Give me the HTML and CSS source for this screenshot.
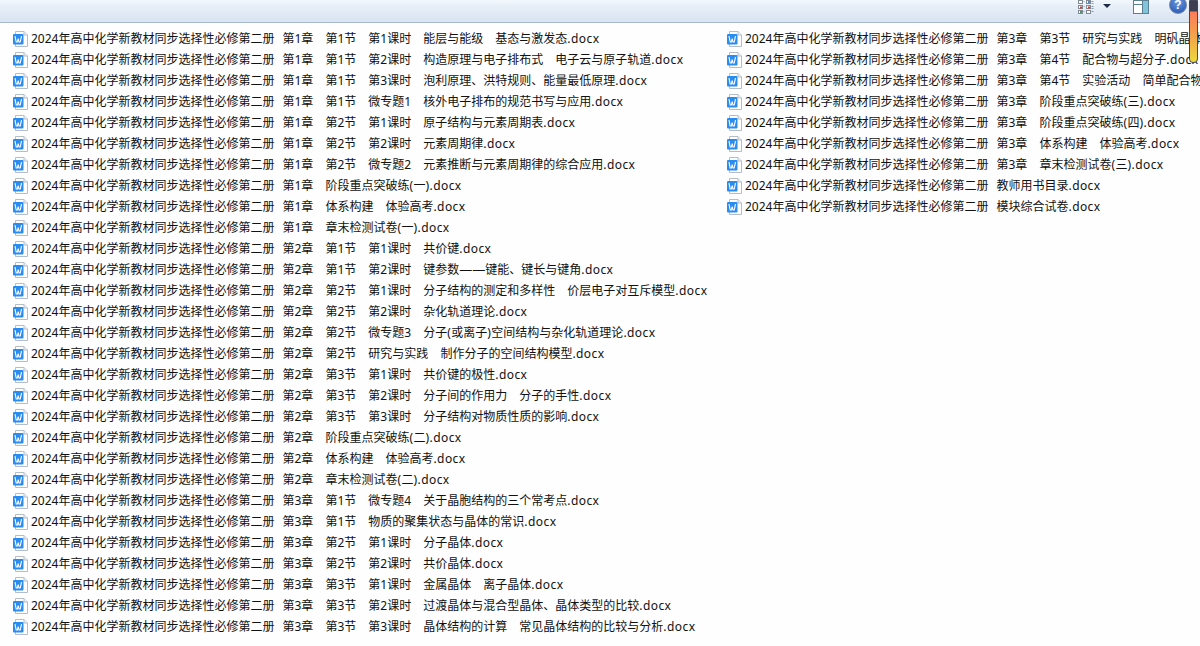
FILE: index.html
```html
<!DOCTYPE html>
<html lang="zh-CN">
<head>
<meta charset="utf-8">
<title>文件列表</title>
<link rel="stylesheet" href="styles.css">
</head>
<body>
<svg class="defs" width="0" height="0" aria-hidden="true">
  <symbol id="word" viewBox="0 0 16 16">
    <path d="M2.5 .5H11L14.5 4V15.5H2.5Z" fill="#fff" stroke="#b4bdc8"/>
    <path d="M11 .5V4H14.5" fill="#eef1f5" stroke="#b4bdc8"/>
    <rect x="0" y="3" width="10.5" height="10.5" rx="1" fill="#2b8cf0"/>
    <path d="M2 5.2 3.2 11H4.4L5.2 7.5 6 11H7.2L8.5 5.2" fill="none" stroke="#fff" stroke-width="1.1"/>
  </symbol>
</svg>
<header class="toolbar">
  <svg class="view-icon" width="16" height="14" viewBox="0 0 16 14">
    <g fill="#fff" stroke="#7f8a94">
      <rect x=".5" y=".5" width="4" height="3"/><rect x=".5" y="5.5" width="4" height="3"/><rect x=".5" y="10.5" width="4" height="3"/>
      <rect x="8.5" y=".5" width="4" height="3"/><rect x="8.5" y="5.5" width="4" height="3"/><rect x="8.5" y="10.5" width="4" height="3"/>
    </g>
    <g fill="#8d9aa6">
      <rect x="5.5" y="1" width="1" height="1"/><rect x="5.5" y="6" width="1" height="1"/><rect x="5.5" y="11" width="1" height="1"/>
      <rect x="13.5" y="1" width="2" height="1"/><rect x="13.5" y="3" width="2" height="1"/><rect x="13.5" y="6" width="2" height="1"/><rect x="13.5" y="8" width="2" height="1"/><rect x="13.5" y="11" width="2" height="1"/>
    </g>
    <rect x="2" y="6.5" width="2" height="2" fill="#d8392b"/>
    <rect x="10" y="6.5" width="2" height="2" fill="#d8392b"/>
    <rect x="2" y="11" width="2" height="2" fill="#4d9a6a"/>
    <rect x="10" y="1" width="2" height="2" fill="#4d8fc0"/>
  </svg>
  <span class="caret"></span>
  <svg class="pane-icon" width="16" height="14" viewBox="0 0 16 14">
    <rect x=".5" y=".5" width="15" height="13" fill="#fff" stroke="#5d7f94"/>
    <rect x="10" y="1" width="5" height="12" fill="#7fc4d8"/>
    <path d="M1 4.5H10M9.5 1V13" stroke="#5d7f94"/>
  </svg>
  <span class="help">?</span>
</header>
<div class="gauge"></div>
<main class="files">
<div class="file"><svg class="ico"><use href="#word"/></svg><span>2024年高中化学新教材同步选择性必修第二册  第1章   第1节   第1课时   能层与能级   基态与激发态<span class="ext">.docx</span></span></div>
<div class="file"><svg class="ico"><use href="#word"/></svg><span>2024年高中化学新教材同步选择性必修第二册  第1章   第1节   第2课时   构造原理与电子排布式   电子云与原子轨道<span class="ext">.docx</span></span></div>
<div class="file"><svg class="ico"><use href="#word"/></svg><span>2024年高中化学新教材同步选择性必修第二册  第1章   第1节   第3课时   泡利原理、洪特规则、能量最低原理<span class="ext">.docx</span></span></div>
<div class="file"><svg class="ico"><use href="#word"/></svg><span>2024年高中化学新教材同步选择性必修第二册  第1章   第1节   微专题1   核外电子排布的规范书写与应用<span class="ext">.docx</span></span></div>
<div class="file"><svg class="ico"><use href="#word"/></svg><span>2024年高中化学新教材同步选择性必修第二册  第1章   第2节   第1课时   原子结构与元素周期表<span class="ext">.docx</span></span></div>
<div class="file"><svg class="ico"><use href="#word"/></svg><span>2024年高中化学新教材同步选择性必修第二册  第1章   第2节   第2课时   元素周期律<span class="ext">.docx</span></span></div>
<div class="file"><svg class="ico"><use href="#word"/></svg><span>2024年高中化学新教材同步选择性必修第二册  第1章   第2节   微专题2   元素推断与元素周期律的综合应用<span class="ext">.docx</span></span></div>
<div class="file"><svg class="ico"><use href="#word"/></svg><span>2024年高中化学新教材同步选择性必修第二册  第1章   阶段重点突破练<span class="ext">(</span>一<span class="ext">)</span><span class="ext">.docx</span></span></div>
<div class="file"><svg class="ico"><use href="#word"/></svg><span>2024年高中化学新教材同步选择性必修第二册  第1章   体系构建   体验高考<span class="ext">.docx</span></span></div>
<div class="file"><svg class="ico"><use href="#word"/></svg><span>2024年高中化学新教材同步选择性必修第二册  第1章   章末检测试卷<span class="ext">(</span>一<span class="ext">)</span><span class="ext">.docx</span></span></div>
<div class="file"><svg class="ico"><use href="#word"/></svg><span>2024年高中化学新教材同步选择性必修第二册  第2章   第1节   第1课时   共价键<span class="ext">.docx</span></span></div>
<div class="file"><svg class="ico"><use href="#word"/></svg><span>2024年高中化学新教材同步选择性必修第二册  第2章   第1节   第2课时   键参数<span class="dash">——</span>键能、键长与键角<span class="ext">.docx</span></span></div>
<div class="file"><svg class="ico"><use href="#word"/></svg><span>2024年高中化学新教材同步选择性必修第二册  第2章   第2节   第1课时   分子结构的测定和多样性   价层电子对互斥模型<span class="ext">.docx</span></span></div>
<div class="file"><svg class="ico"><use href="#word"/></svg><span>2024年高中化学新教材同步选择性必修第二册  第2章   第2节   第2课时   杂化轨道理论<span class="ext">.docx</span></span></div>
<div class="file"><svg class="ico"><use href="#word"/></svg><span>2024年高中化学新教材同步选择性必修第二册  第2章   第2节   微专题3   分子<span class="ext">(</span>或离子<span class="ext">)</span>空间结构与杂化轨道理论<span class="ext">.docx</span></span></div>
<div class="file"><svg class="ico"><use href="#word"/></svg><span>2024年高中化学新教材同步选择性必修第二册  第2章   第2节   研究与实践   制作分子的空间结构模型<span class="ext">.docx</span></span></div>
<div class="file"><svg class="ico"><use href="#word"/></svg><span>2024年高中化学新教材同步选择性必修第二册  第2章   第3节   第1课时   共价键的极性<span class="ext">.docx</span></span></div>
<div class="file"><svg class="ico"><use href="#word"/></svg><span>2024年高中化学新教材同步选择性必修第二册  第2章   第3节   第2课时   分子间的作用力   分子的手性<span class="ext">.docx</span></span></div>
<div class="file"><svg class="ico"><use href="#word"/></svg><span>2024年高中化学新教材同步选择性必修第二册  第2章   第3节   第3课时   分子结构对物质性质的影响<span class="ext">.docx</span></span></div>
<div class="file"><svg class="ico"><use href="#word"/></svg><span>2024年高中化学新教材同步选择性必修第二册  第2章   阶段重点突破练<span class="ext">(</span>二<span class="ext">)</span><span class="ext">.docx</span></span></div>
<div class="file"><svg class="ico"><use href="#word"/></svg><span>2024年高中化学新教材同步选择性必修第二册  第2章   体系构建   体验高考<span class="ext">.docx</span></span></div>
<div class="file"><svg class="ico"><use href="#word"/></svg><span>2024年高中化学新教材同步选择性必修第二册  第2章   章末检测试卷<span class="ext">(</span>二<span class="ext">)</span><span class="ext">.docx</span></span></div>
<div class="file"><svg class="ico"><use href="#word"/></svg><span>2024年高中化学新教材同步选择性必修第二册  第3章   第1节   微专题4   关于晶胞结构的三个常考点<span class="ext">.docx</span></span></div>
<div class="file"><svg class="ico"><use href="#word"/></svg><span>2024年高中化学新教材同步选择性必修第二册  第3章   第1节   物质的聚集状态与晶体的常识<span class="ext">.docx</span></span></div>
<div class="file"><svg class="ico"><use href="#word"/></svg><span>2024年高中化学新教材同步选择性必修第二册  第3章   第2节   第1课时   分子晶体<span class="ext">.docx</span></span></div>
<div class="file"><svg class="ico"><use href="#word"/></svg><span>2024年高中化学新教材同步选择性必修第二册  第3章   第2节   第2课时   共价晶体<span class="ext">.docx</span></span></div>
<div class="file"><svg class="ico"><use href="#word"/></svg><span>2024年高中化学新教材同步选择性必修第二册  第3章   第3节   第1课时   金属晶体   离子晶体<span class="ext">.docx</span></span></div>
<div class="file"><svg class="ico"><use href="#word"/></svg><span>2024年高中化学新教材同步选择性必修第二册  第3章   第3节   第2课时   过渡晶体与混合型晶体、晶体类型的比较<span class="ext">.docx</span></span></div>
<div class="file"><svg class="ico"><use href="#word"/></svg><span>2024年高中化学新教材同步选择性必修第二册  第3章   第3节   第3课时   晶体结构的计算   常见晶体结构的比较与分析<span class="ext">.docx</span></span></div>
<div class="file"><svg class="ico"><use href="#word"/></svg><span>2024年高中化学新教材同步选择性必修第二册  第3章   第3节   研究与实践   明矾晶体的制备<span class="ext">.docx</span></span></div>
<div class="file"><svg class="ico"><use href="#word"/></svg><span>2024年高中化学新教材同步选择性必修第二册  第3章   第4节   配合物与超分子<span class="ext">.docx</span></span></div>
<div class="file"><svg class="ico"><use href="#word"/></svg><span>2024年高中化学新教材同步选择性必修第二册  第3章   第4节   实验活动   简单配合物的形成<span class="ext">.docx</span></span></div>
<div class="file"><svg class="ico"><use href="#word"/></svg><span>2024年高中化学新教材同步选择性必修第二册  第3章   阶段重点突破练<span class="ext">(</span>三<span class="ext">)</span><span class="ext">.docx</span></span></div>
<div class="file"><svg class="ico"><use href="#word"/></svg><span>2024年高中化学新教材同步选择性必修第二册  第3章   阶段重点突破练<span class="ext">(</span>四<span class="ext">)</span><span class="ext">.docx</span></span></div>
<div class="file"><svg class="ico"><use href="#word"/></svg><span>2024年高中化学新教材同步选择性必修第二册  第3章   体系构建   体验高考<span class="ext">.docx</span></span></div>
<div class="file"><svg class="ico"><use href="#word"/></svg><span>2024年高中化学新教材同步选择性必修第二册  第3章   章末检测试卷<span class="ext">(</span>三<span class="ext">)</span><span class="ext">.docx</span></span></div>
<div class="file"><svg class="ico"><use href="#word"/></svg><span>2024年高中化学新教材同步选择性必修第二册  教师用书目录<span class="ext">.docx</span></span></div>
<div class="file"><svg class="ico"><use href="#word"/></svg><span>2024年高中化学新教材同步选择性必修第二册  模块综合试卷<span class="ext">.docx</span></span></div>
</main>
</body>
</html>
```
FILE: styles.css
```css
* { box-sizing: border-box; }
html, body { margin: 0; height: 100%; overflow: hidden; }
body {
  width: 1200px;
  height: 646px;
  background: #fefefe;
  color: #111;
  font: 12px/21px "Noto Sans", "Noto Sans CJK SC", sans-serif;
  position: relative;
}
.defs { position: absolute; }
.toolbar {
  height: 23px;
  display: flex;
  align-items: flex-start;
  padding: 0 0 0 1078px;
  background: linear-gradient(#f3f8fd 0, #e8eff8 6px, #dce6f3 18px);
  border-bottom: 1px solid #a7b6cb;
  overflow: hidden;
}
.view-icon { flex: none; }
.caret {
  margin: 4px 0 0 9px;
  width: 0;
  height: 0;
  border: 4px solid transparent;
  border-top: 4px solid #1d2c42;
  border-bottom: 0;
  flex: none;
}
.pane-icon { margin: 0 0 0 22px; flex: none; }
.help {
  margin: -4px 0 0 20px;
  padding-top: 3px;
  width: 18px;
  height: 18px;
  border-radius: 50%;
  background: radial-gradient(circle at 50% 30%, #6f9be0, #1c4fb0);
  border: 1px solid #7a8596;
  color: #fff;
  font: bold 12px/10px "Liberation Sans", sans-serif;
  text-align: center;
  flex: none;
}
.gauge {
  position: absolute;
  top: 0;
  left: 1189px;
  width: 9px;
  height: 63px;
  border: 1px solid #45455a;
  border-radius: 0 0 4px 4px;
  background: linear-gradient(#3e3e50 0, #3e3e50 10px, #fb7d5a 11px, #f4a24d 34px, #ecd93a 100%);
}
.files {
  padding-top: 5px;
  height: 623px;
  display: grid;
  grid-auto-flow: column;
  grid-template-rows: repeat(29, 21px);
  grid-template-columns: 714px 1fr;
  overflow: hidden;
}
.file {
  display: flex;
  align-items: center;
  padding-left: 13px;
  gap: 2px;
  white-space: pre;
  word-spacing: 0.9px;
  min-width: 0;
  overflow: hidden;
}
.ext { letter-spacing: 0.42px; }
.dash {
  font-size: 13px;
  line-height: 0;
}
.ico { width: 16px; height: 16px; flex: none; }
```
